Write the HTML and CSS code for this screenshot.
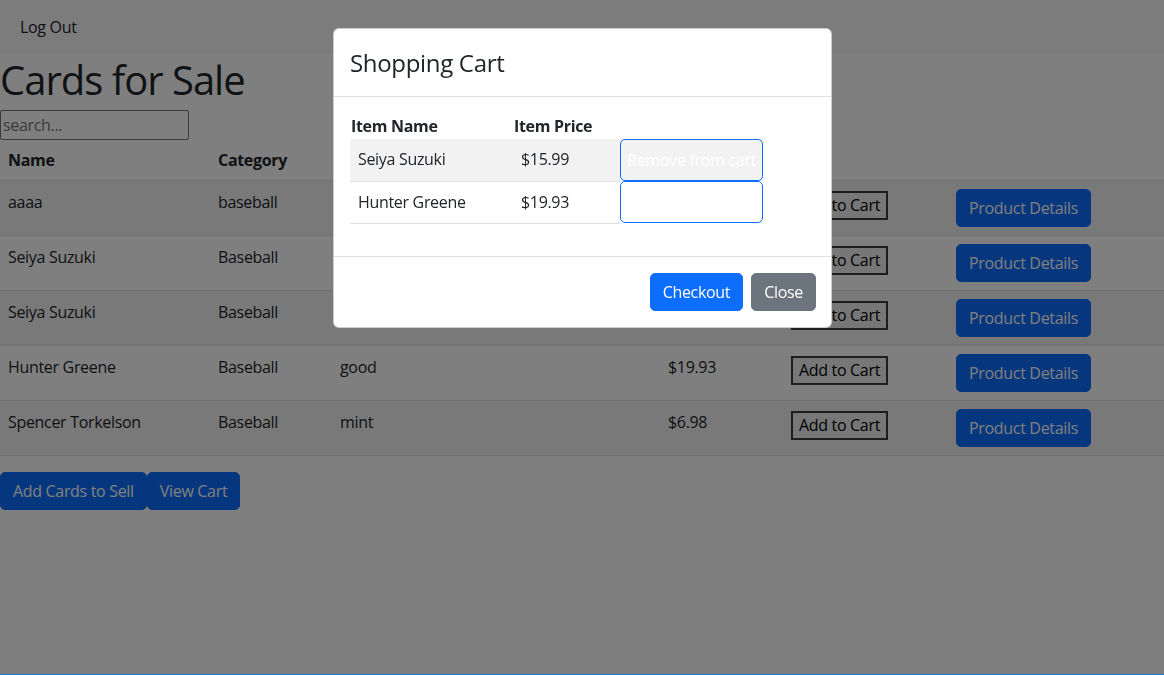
FILE: index.html
```html
<!DOCTYPE html>
<html lang="en">
<head>
<meta charset="utf-8">
<title>Cards for Sale</title>
<link rel="stylesheet" href="styles.css">
</head>
<body>
<nav class="navbar"><a class="nav-link" href="#">Log Out</a></nav>
<h1 class="title">Cards for Sale</h1>
<input class="search" type="text" placeholder="search...">
<table class="cards">
  <colgroup>
    <col class="c-name"><col class="c-cat"><col class="c-cond"><col class="c-price"><col class="c-add"><col>
  </colgroup>
  <thead>
    <tr><th>Name</th><th>Category</th><th></th><th></th><th></th><th></th></tr>
  </thead>
  <tbody>
    <tr><td>aaaa</td><td>baseball</td><td></td><td></td><td><button class="plain-btn">Add to Cart</button></td><td><button class="btn btn-primary">Product Details</button></td></tr>
    <tr><td>Seiya Suzuki</td><td>Baseball</td><td></td><td></td><td><button class="plain-btn">Add to Cart</button></td><td><button class="btn btn-primary">Product Details</button></td></tr>
    <tr><td>Seiya Suzuki</td><td>Baseball</td><td></td><td></td><td><button class="plain-btn">Add to Cart</button></td><td><button class="btn btn-primary">Product Details</button></td></tr>
    <tr><td>Hunter Greene</td><td>Baseball</td><td>good</td><td>$19.93</td><td><button class="plain-btn">Add to Cart</button></td><td><button class="btn btn-primary">Product Details</button></td></tr>
    <tr><td>Spencer Torkelson</td><td>Baseball</td><td>mint</td><td>$6.98</td><td><button class="plain-btn">Add to Cart</button></td><td><button class="btn btn-primary">Product Details</button></td></tr>
  </tbody>
</table>
<div class="actions"><button class="btn btn-primary">Add Cards to Sell</button><button class="btn btn-primary">View Cart</button></div>

<div class="backdrop"></div>
<div class="modal">
  <div class="modal-content">
    <div class="modal-header"><h4 class="modal-title">Shopping Cart</h4></div>
    <div class="modal-body">
      <table class="cart">
        <colgroup><col class="k-name"><col class="k-price"><col class="k-act"></colgroup>
        <thead><tr><th>Item Name</th><th>Item Price</th><th></th></tr></thead>
        <tbody>
          <tr><td>Seiya Suzuki</td><td>$15.99</td><td class="act"><button class="remove-btn">Remove from cart</button></td></tr>
          <tr><td>Hunter Greene</td><td>$19.93</td><td class="act"><button class="remove-btn">Remove from cart</button></td></tr>
        </tbody>
      </table>
    </div>
    <div class="modal-footer">
      <button class="btn btn-primary">Checkout</button>
      <button class="btn btn-secondary">Close</button>
    </div>
  </div>
</div>
<div class="screen-edge"></div>
</body>
</html>
```
FILE: styles.css
```css
* { box-sizing: border-box; }
body {
  margin: 0;
  font-family: "Open Sans", sans-serif;
  font-size: 16px;
  line-height: 1.5;
  letter-spacing: -0.02em;
  color: #212529;
  background: #fff;
}
button, input { letter-spacing: inherit; }
.navbar {
  display: flex;
  background: #f8f9fa;
  padding: 7px 12px;
}
.nav-link {
  padding: 8px;
  color: #212529;
  text-decoration: none;
}
.title {
  margin: 0 0 8px;
  padding-top: 4px;
  font-size: 40px;
  line-height: 44px;
  font-weight: 500;
  letter-spacing: -0.025em;
}
.search {
  display: block;
  width: 189px;
  height: 30px;
  margin: 0;
  padding: 1px 2px;
  border: 1px solid #767676;
  border-radius: 2px;
  font: inherit;
  color: #212529;
}
.search::placeholder { color: #757575; }
.cards {
  width: 100%;
  border-collapse: collapse;
  table-layout: fixed;
  margin-bottom: 16px;
}
.c-name { width: 210px; }
.c-cat { width: 122px; }
.c-cond { width: 328px; }
.c-price { width: 123px; }
.c-add { width: 165px; }
.cards th, .cards td {
  padding: 8px;
  text-align: left;
  vertical-align: top;
  border-bottom: 1px solid #dee2e6;
}
.cards th { font-weight: 700; }
.cards td { padding-top: 9px; padding-bottom: 7px; }
.cards tbody tr:nth-child(odd) td { background: #f2f2f2; }
.plain-btn {
  display: inline-block;
  margin-top: 1px;
  padding: 1px 6px;
  font: inherit;
  line-height: 23px;
  color: #000;
  background: #efefef;
  border: 2px solid #3b3b3b;
  border-radius: 0;
}
.btn {
  display: inline-block;
  padding: 6px 12px;
  font: inherit;
  line-height: 24px;
  border: 1px solid transparent;
  border-radius: 5px;
  white-space: nowrap;
}
.cards .btn { position: relative; top: -1px; }
.btn-primary { background: #0d6efd; border-color: #0d6efd; color: #fff; }
.btn-secondary { background: #6c757d; border-color: #6c757d; color: #fff; }
.actions { display: flex; }

.backdrop {
  position: fixed;
  inset: 0;
  background: rgba(0, 0, 0, 0.5);
}
.modal {
  position: fixed;
  inset: 0;
  display: flex;
  justify-content: center;
  align-items: flex-start;
  padding: 28px 0 0 1px;
}
.modal-content {
  width: 499px;
  background: #fff;
  border: 1px solid rgba(0, 0, 0, 0.2);
  border-radius: 6px;
}
.modal-header {
  padding: 16px;
  border-bottom: 1px solid #dee2e6;
}
.modal-title {
  margin: 0;
  font-size: 24px;
  line-height: 35px;
  font-weight: 500;
}
.modal-body { padding: 16px; }
.cart {
  border-collapse: collapse;
  table-layout: fixed;
  width: 413px;
  margin-bottom: 16px;
}
.k-name { width: 163px; }
.k-price { width: 107px; }
.k-act { width: 143px; }
.cart th {
  padding: 1px;
  text-align: left;
  font-weight: 700;
}
.cart td {
  padding: 8px 8px 9px;
  border-bottom: 1px solid #dee2e6;
}
.cart tbody tr:nth-child(odd) td { background: #f2f2f2; }
.cart td.act {
  padding: 0;
  border-bottom: none;
}
.remove-btn {
  display: block;
  width: 100%;
  height: 42px;
  padding: 0 6px;
  font: inherit;
  color: #fff;
  background: transparent;
  border: 1px solid #0d6efd;
  border-radius: 5px;
  white-space: nowrap;
  overflow: hidden;
}
.modal-footer {
  display: flex;
  justify-content: flex-end;
  padding: 12px 11px 12px 12px;
  border-top: 1px solid #dee2e6;
}
.modal-footer .btn { margin: 4px; }
.screen-edge {
  position: fixed;
  left: 0;
  right: 0;
  bottom: 0;
  height: 1px;
  background: #1a78c6;
}
```
